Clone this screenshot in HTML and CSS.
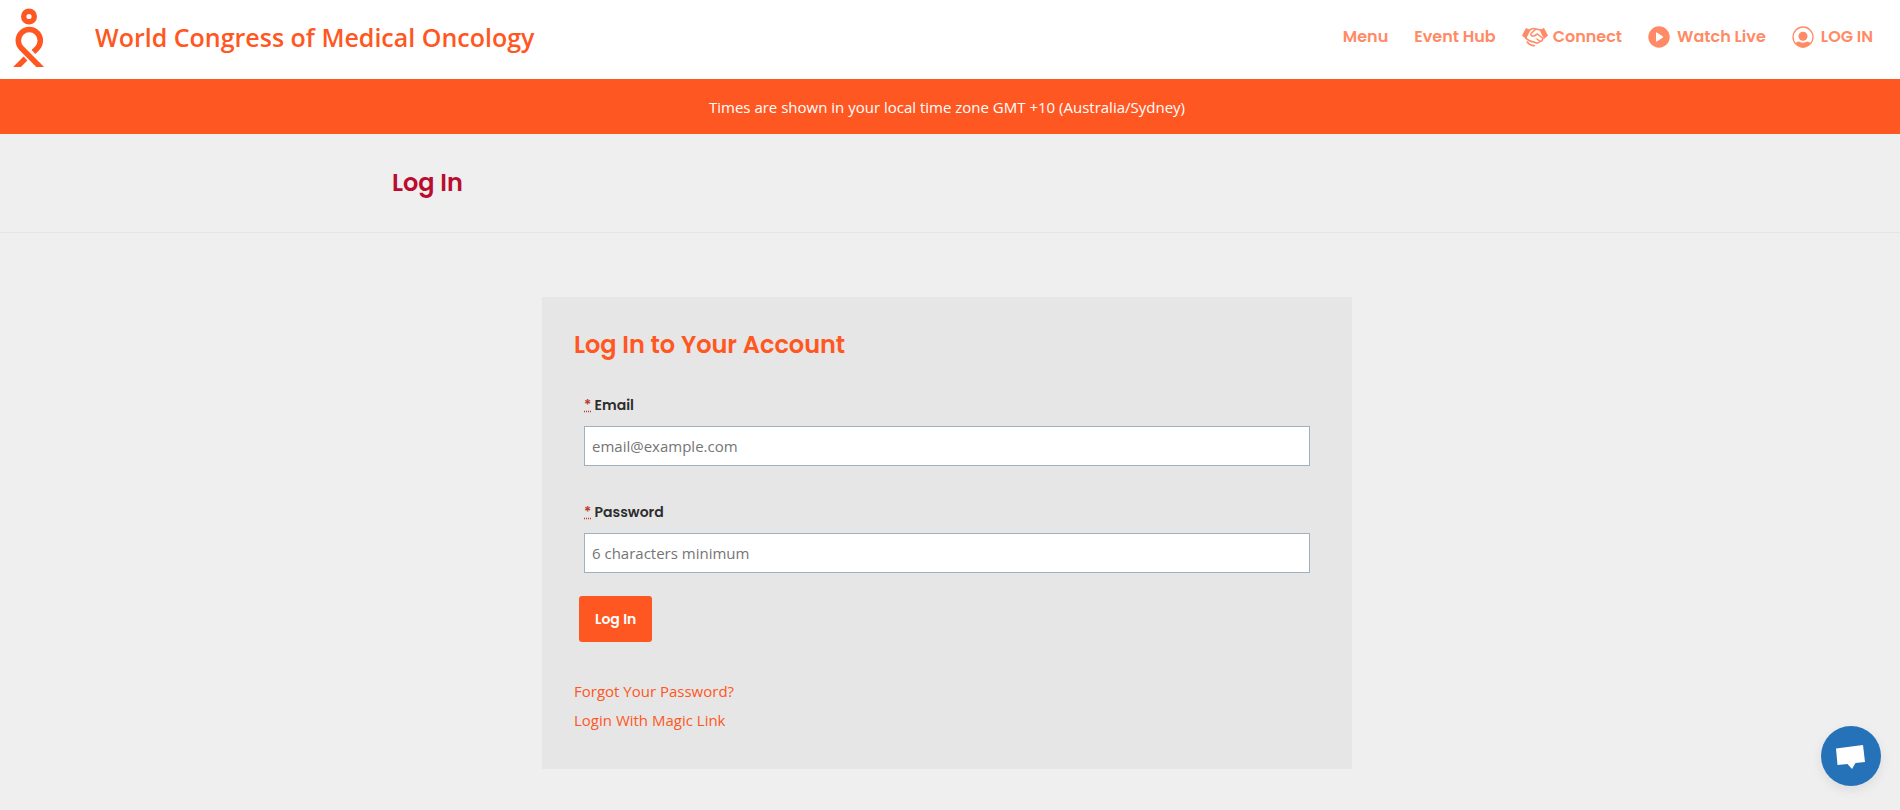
FILE: index.html
```html
<!DOCTYPE html>
<html lang="en">
<head>
    <meta charset="UTF-8">
    <meta name="viewport" content="width=device-width, initial-scale=1.0">
    <title>Log In - World Congress of Medical Oncology</title>
    <link rel="stylesheet" href="styles.css">
</head>
<body>
    <header class="header">
        <a href="#" class="brand">
            <svg class="brand-logo" viewBox="0 0 32 60" width="32" height="60" aria-hidden="true">
                <circle cx="16" cy="9.5" r="5.3" fill="none" stroke="#ff5722" stroke-width="5.4"/>
                <path d="M20.500 45 L24.100 41.300 A11 11 0 1 0 8.500 41.300 L31 63.800 M12.500 51.500 L0 64" fill="none" stroke="#ff5722" stroke-width="5.500"/>
            </svg>
            <span class="brand-name">World Congress of Medical Oncology</span>
        </a>
        <nav class="nav">
            <a href="#">Menu</a>
            <a href="#">Event Hub</a>
            <a href="#">
                <svg class="icon-hands" viewBox="0 0 26 20" width="26" height="20" aria-hidden="true">
                    <path d="M4 1 L8.500 3 L4 12 L0 8.500 Z M22 1 L17.500 3 L22 12 L26 8.500 Z" fill="currentColor"/>
                    <path d="M7 3.500 Q10 1 13 1.800 L18.500 3 M13.500 2.500 L9 6.500 Q8.500 9.500 12 9 L15.500 7 L21 11.500 Q20 14.500 18 14.500 Q17 16.500 14.500 16 L12 15 Q6 14 4 11 M5 15 Q8 18.500 12.500 18.800 M15 12 L18 14.500" fill="none" stroke="currentColor" stroke-width="1.500" stroke-linecap="round" stroke-linejoin="round"/>
                </svg>
                Connect
            </a>
            <a href="#">
                <svg class="icon-round" viewBox="0 0 22 22" width="22" height="22" aria-hidden="true">
                    <circle cx="11" cy="11" r="10.700" fill="currentColor"/>
                    <path d="M8.500 6.800 L15 11 L8.500 15.200 Z" fill="#fff" stroke="#fff" stroke-linejoin="round"/>
                </svg>
                Watch Live
            </a>
            <a href="#">
                <svg class="icon-round" viewBox="0 0 22 22" width="22" height="22" aria-hidden="true">
                    <circle cx="11" cy="11" r="10" fill="none" stroke="currentColor" stroke-width="1.300"/>
                    <circle cx="11" cy="10.200" r="4.500" fill="currentColor"/>
                    <path d="M3.500 17.500 Q4.500 15.500 7 15.500 Q11 18 15 15.500 Q17.500 15.500 18.500 17.500 Q15.500 21.500 11 21.500 Q6.500 21.500 3.500 17.500 Z" fill="currentColor"/>
                </svg>
                LOG IN
            </a>
        </nav>
    </header>

    <div class="banner">Times are shown in your local time zone GMT +10 (Australia/Sydney)</div>

    <div class="page-title">
        <h1>Log In</h1>
    </div>

    <main class="main">
        <section class="card">
            <h2>Log In to Your Account</h2>
            <form class="login-form">
                <div class="field">
                    <label for="email"><abbr title="required">*</abbr> Email</label>
                    <input type="email" id="email" placeholder="email@example.com">
                </div>
                <div class="field">
                    <label for="password"><abbr title="required">*</abbr> Password</label>
                    <input type="password" id="password" placeholder="6 characters minimum">
                </div>
                <div class="actions">
                    <button type="submit" class="btn">Log In</button>
                </div>
            </form>
            <div class="links">
                <a href="#">Forgot Your Password?</a>
                <a href="#">Login With Magic Link</a>
            </div>
        </section>
    </main>

    <button type="button" class="chat" aria-label="Open chat">
        <svg viewBox="0 0 60 60" width="60" height="60" aria-hidden="true">
            <path d="M15 22.500 L42 19 L44 36 L34.500 37 L31 43 L26.500 38 L16.500 39 Z" fill="#fff"/>
        </svg>
    </button>
</body>
</html>
```
FILE: styles.css
```css
* {
    box-sizing: border-box;
}

body {
    margin: 0;
    background: #efefef;
    color: #2d2d2d;
    font-family: "Segoe UI", "Open Sans", sans-serif;
    font-size: 15px;
}

a {
    text-decoration: none;
}

h1, h2, label, .nav, .btn {
    font-family: Poppins, Inter, sans-serif;
}

.header {
    display: flex;
    justify-content: space-between;
    align-items: center;
    height: 79px;
    padding: 0 27px 6px 13px;
    background: #fff;
}

.brand {
    display: flex;
    align-items: center;
    gap: 50px;
    color: #ff5722;
}

.brand-name {
    font-size: 25px;
    font-weight: 600;
}

.nav {
    display: flex;
    gap: 26px;
    font-size: 16px;
    font-weight: 600;
}

.nav a {
    display: flex;
    align-items: center;
    color: #ff8a65;
}

.icon-hands {
    margin-right: 5px;
}

.icon-round {
    margin-right: 7px;
}

.banner {
    padding: 17px 6px 16px 0;
    background: #ff5722;
    color: #fff;
    line-height: 22px;
    text-align: center;
}

.page-title {
    padding: 33px 6px 33px 0;
    border-bottom: 1px solid #e2e6e9;
}

.page-title h1 {
    max-width: 1110px;
    margin: 0 auto;
    color: #ba0c2f;
    font-size: 24px;
    font-weight: 600;
    line-height: 32px;
}

.main {
    padding: 64px 6px 41px 0;
}

.card {
    max-width: 810px;
    margin: 0 auto;
    padding: 32px 32px 34px;
    background: #e6e6e6;
}

.card h2 {
    margin: 0 0 34px;
    color: #ff5722;
    font-size: 24px;
    font-weight: 600;
    line-height: 32px;
}

.login-form {
    padding: 0 10px;
}

.field + .field {
    margin-top: 36px;
}

.field label {
    display: block;
    margin-bottom: 10px;
    font-size: 14px;
    font-weight: 600;
    line-height: 21px;
}

.field abbr {
    color: #c0392b;
}

.field input {
    display: block;
    width: 100%;
    height: 40px;
    padding: 0 7px;
    border: 1px solid #9fb0bf;
    background: #fff;
    font-family: inherit;
    font-size: 15px;
}

.field input::placeholder {
    color: #757575;
}

.actions {
    margin: 23px -5px 35px;
}

.btn {
    display: block;
    height: 46px;
    padding: 0 16px;
    border: 0;
    border-radius: 3px;
    background: #ff5722;
    color: #fff;
    font-size: 14px;
    font-weight: 600;
    cursor: pointer;
}

.links a {
    display: block;
    color: #ff5722;
    line-height: 29px;
}

.chat {
    position: fixed;
    right: 19px;
    bottom: 24px;
    width: 60px;
    height: 60px;
    padding: 0;
    border: 0;
    border-radius: 50%;
    background: #2672b9;
    box-shadow: 0 4px 12px rgba(0, 0, 0, 0.08);
    cursor: pointer;
}
```
